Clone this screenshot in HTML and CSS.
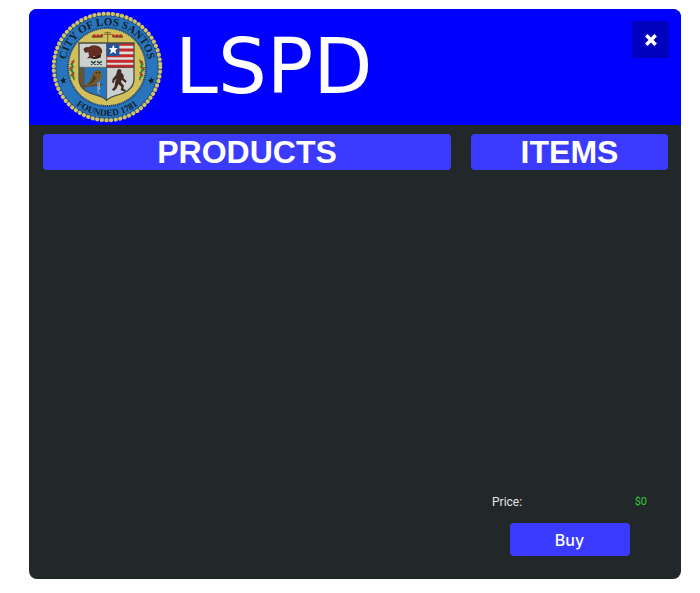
FILE: index.html
```html
<!DOCTYPE html>
<html lang="en">
<head>
  <meta charset="UTF-8">
  <meta name="viewport" content="width=device-width, initial-scale=1.0">
  <title>LSPD</title>
  <link rel="stylesheet" href="styles.css">
</head>
<body>
  <main class="shop">
    <header class="shop-header">
      <!-- City seal -->
      <svg class="seal" viewBox="0 0 336 336" role="img" aria-label="City of Los Santos seal">
        <defs>
          <path id="arcTop" d="M43 168 A125 125 0 0 1 293 168"/>
          <path id="arcBottom" d="M21 168 A147 147 0 0 0 315 168"/>
          <clipPath id="shieldClip">
            <path d="M84 96H249V203C249 235 221 246 193 254Q177 258 167 268Q157 258 141 254C112 246 84 235 84 203Z"/>
          </clipPath>
        </defs>
        <circle cx="168" cy="168" r="158" fill="#24518a"/>
        <circle class="beads" cx="168" cy="168" r="160"/>
        <circle cx="168" cy="168" r="152" fill="#2874bd"/>
        <circle cx="168" cy="168" r="117" fill="#d2c15b"/>
        <circle class="rope" cx="168" cy="168" r="117"/>
        <text class="seal-top"><textPath href="#arcTop" startOffset="50%">CITY OF LOS SANTOS</textPath></text>
        <text class="seal-bottom"><textPath href="#arcBottom" startOffset="50%">FOUNDED 1781</textPath></text>
        <path fill="#10202c" d="M37 198L39 205L46 204L41 210L45 216L38 214L33 219L33 212L27 208L34 205Z"/>
        <path fill="#10202c" d="M301 198L303 205L310 204L305 210L309 216L302 214L297 219L297 212L291 208L298 205Z"/>
        <!-- Top ornament -->
        <path d="M170 62V93M158 70H183M161 65H179" stroke="#756a2e" stroke-width="3"/>
        <path d="M122 77H155M185 77H216" stroke="#385e2b" stroke-width="5"/>
        <g fill="#b82c27">
          <circle cx="130" cy="75" r="5"/><circle cx="141" cy="75" r="5"/><circle cx="152" cy="73" r="4"/>
          <circle cx="187" cy="74" r="4"/><circle cx="198" cy="75" r="5"/><circle cx="209" cy="75" r="5"/>
        </g>
        <!-- Side branches -->
        <path d="M69 146Q56 170 70 208M266 146Q280 170 266 208" fill="none" stroke="#437b35" stroke-width="4"/>
        <path d="M69 150L60 160L67 167L57 177L68 184L60 193L71 201M266 150L276 160L269 167L279 177L268 184L275 193L265 201" fill="none" stroke="#2d813c" stroke-width="4"/>
        <g fill="#c93329">
          <circle cx="65" cy="153" r="4"/><circle cx="59" cy="171" r="4"/><circle cx="66" cy="190" r="4"/>
          <circle cx="272" cy="153" r="4"/><circle cx="278" cy="171" r="4"/><circle cx="270" cy="190" r="4"/>
        </g>
        <!-- Shield -->
        <g clip-path="url(#shieldClip)">
          <path fill="#cad1ce" d="M84 96H249V269H84Z"/>
          <path fill="#2874bd" d="M84 170H167V269H84Z"/>
          <path fill="#dce0df" d="M167 96H249V169H167Z"/>
          <path stroke="#c5292d" stroke-width="9" d="M167 100H249M167 117H249M167 134H249M167 151H249M167 166H249"/>
          <path fill="#24539a" d="M167 96H205V135H167Z"/>
          <path fill="#fff" d="M187 101L191 111L201 112L193 118L196 129L187 123L177 129L180 118L173 112L183 111Z"/>
          <!-- Beaver over crossed branches -->
          <path fill="#632d23" d="M97 115Q103 106 112 109Q125 99 141 105Q156 112 153 125L146 134L150 140H137L130 135L119 142H108L115 135Q111 131 113 124L102 125Z"/>
          <circle cx="106" cy="114" r="2" fill="#171414"/>
          <path d="M149 132Q138 145 121 139" fill="none" stroke="#321b19" stroke-width="6"/>
          <path d="M120 151L134 161M120 161L134 151M138 151L152 161M138 161L152 151" stroke="#273b35" stroke-width="4"/>
          <!-- Owl on a post -->
          <path fill="#66533b" d="M87 170H101V240H87Z"/>
          <path stroke="#5e4930" stroke-width="7" d="M96 226L154 220"/>
          <path fill="#765b2c" d="M131 181Q142 172 151 182Q157 197 145 210Q133 222 108 226L105 221Q117 212 121 198Q124 187 131 181Z"/>
          <path fill="#493b24" d="M125 192Q130 204 110 222Q129 215 137 200Z"/>
          <circle cx="136" cy="185" r="2" fill="#201b18"/><circle cx="145" cy="185" r="2" fill="#201b18"/>
          <path d="M141 214V244M146 214L144 237M140 230L148 234M140 242L147 248" stroke="#a1b4bb" stroke-width="3"/>
          <!-- Walking bigfoot -->
          <path fill="#452b25" d="M199 178Q204 171 211 177L211 185Q220 190 218 202L227 210L224 216L212 206L210 213L219 224L217 233L225 238L222 242L209 238L211 227L202 219L197 232L189 240L182 236L190 228L193 211L197 203L191 208L188 217L183 214L185 203L195 192Z"/>
          <path d="M167 96V268M84 169H249" stroke="#363b40" stroke-width="2"/>
        </g>
        <path fill="none" stroke="#4a4c43" stroke-width="4" d="M84 96H249V203C249 235 221 246 193 254Q177 258 167 268Q157 258 141 254C112 246 84 235 84 203Z"/>
      </svg>
      <h1 class="shop-title">LSPD</h1>
      <button class="close-btn" type="button" aria-label="Close">
        <svg class="close-icon" viewBox="0 0 12 12" aria-hidden="true"><path d="M2 2L10 10M10 2L2 10"/></svg>
      </button>
    </header>

    <div class="shop-body">
      <section class="products">
        <h2 class="section-title">PRODUCTS</h2>
      </section>
      <section class="items">
        <h2 class="section-title">ITEMS</h2>
        <div class="checkout">
          <div class="price-row">
            <span>Price:</span>
            <span class="price">$0</span>
          </div>
          <button class="buy-btn" type="button">Buy</button>
        </div>
      </section>
    </div>
  </main>
</body>
</html>
```
FILE: styles.css
```css
* {
  box-sizing: border-box;
}
body {
  display: flex;
  min-height: 100vh;
  margin: 0;
  padding: 9px 19px 14px 29px;
  background-color: #fff;
  font-family: "Liberation Sans", Arial, sans-serif;
}
.shop {
  display: flex;
  flex: 1;
  flex-direction: column;
  overflow: hidden;
  border-radius: 8px;
  background-color: #22272a;
}

/* Header */
.shop-header {
  display: flex;
  align-items: center;
  gap: 12px;
  padding: 2px 12px 2px 22px;
  background-color: #0000ff;
  color: #fff;
}
.seal {
  width: 112px;
  height: 112px;
}
.beads {
  fill: none;
  stroke: #d1c65b;
  stroke-width: 12;
  stroke-linecap: round;
  stroke-dasharray: 1 13;
}
.rope {
  fill: none;
  stroke: #234d78;
  stroke-width: 6;
  stroke-dasharray: 4 2;
}
.seal-top,
.seal-bottom {
  fill: #10202c;
  font-family: "Liberation Serif", serif;
  font-weight: bold;
  text-anchor: middle;
}
.seal-top {
  font-size: 33px;
}
.seal-bottom {
  font-size: 28px;
}
.shop-title {
  margin: 0;
  font-family: "DejaVu Sans", sans-serif;
  font-size: 77px;
  font-weight: normal;
  line-height: 112px;
}
.close-btn {
  display: flex;
  align-items: center;
  justify-content: center;
  align-self: flex-start;
  width: 37px;
  height: 37px;
  margin: 10px 0 0 auto;
  padding: 0;
  border: none;
  background-color: #0000bf;
  cursor: pointer;
}
.close-icon {
  width: 14px;
  height: 14px;
  fill: none;
  stroke: #fff;
  stroke-width: 3;
}

/* Content */
.shop-body {
  display: grid;
  flex: 1;
  grid-template-columns: 29fr 14fr;
  gap: 20px;
  padding: 9px 13px 23px 14px;
}
.section-title {
  margin: 0;
  border-radius: 4px;
  background-color: #3b3bff;
  color: #fff;
  font-size: 32px;
  line-height: 36px;
  text-align: center;
}
.items {
  display: flex;
  flex-direction: column;
}
.checkout {
  display: flex;
  flex-direction: column;
  align-items: center;
  gap: 13px;
  margin-top: auto;
}
.price-row {
  display: flex;
  justify-content: space-between;
  width: 100%;
  padding: 0 21px;
  color: #e4e5e5;
  font-family: Roboto, sans-serif;
  font-size: 12px;
  line-height: 16px;
}
.price {
  color: #32c832;
  font-size: 11px;
}
.buy-btn {
  width: 120px;
  height: 33px;
  padding: 0;
  border: none;
  border-radius: 4px;
  background-color: #3b3bff;
  color: #fff;
  font-family: Inter, sans-serif;
  font-size: 16px;
  font-weight: 500;
  cursor: pointer;
}
.close-btn:hover,
.buy-btn:hover {
  background-color: #2929d8;
}
```
